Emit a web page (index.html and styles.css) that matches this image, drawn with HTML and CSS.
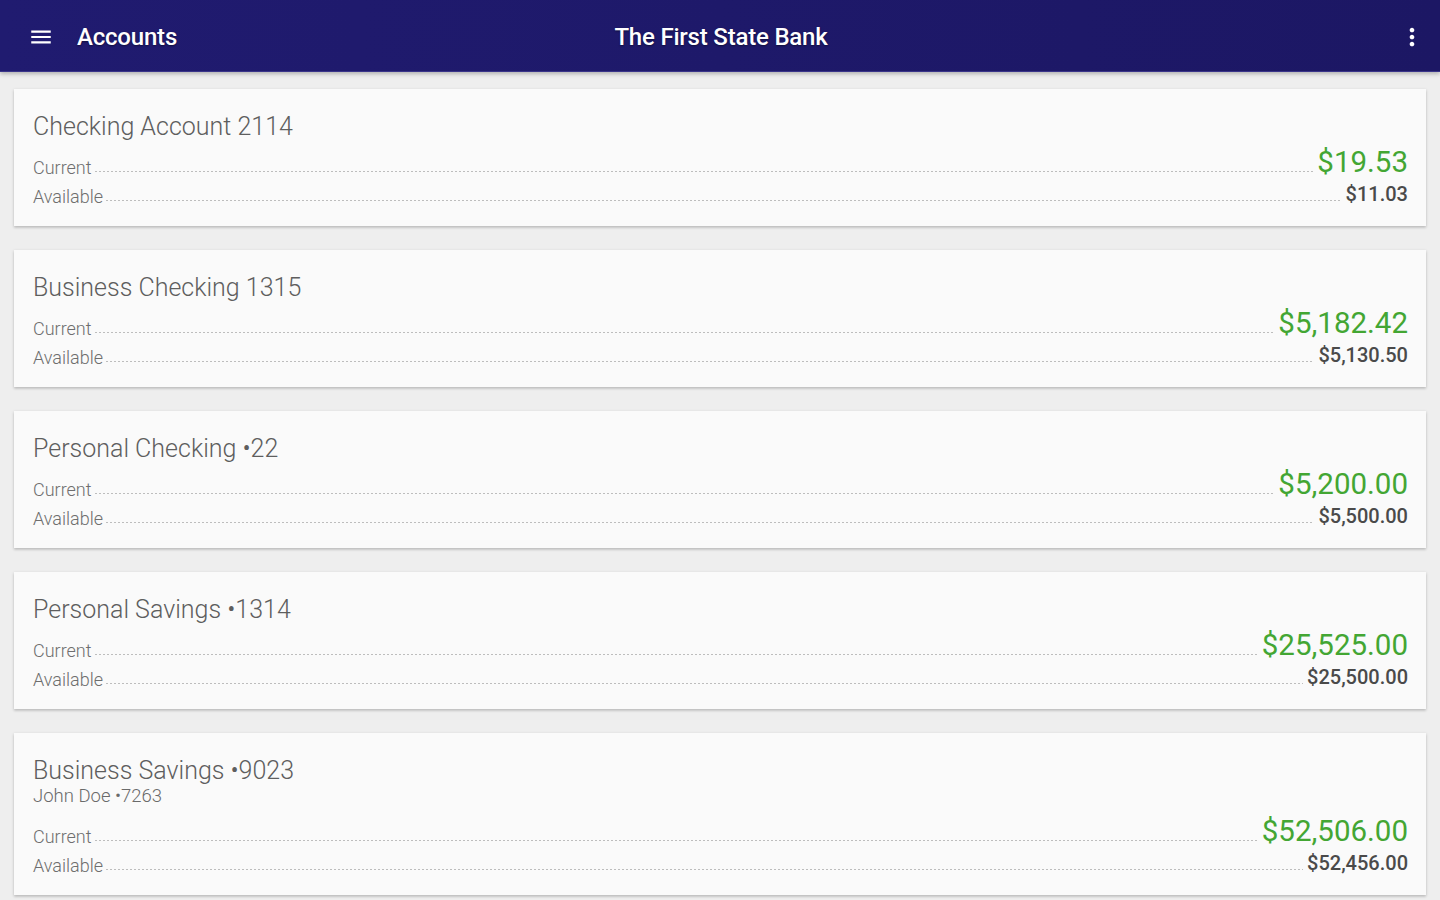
FILE: index.html
```html
<!DOCTYPE html>
<html lang="en">
  <head>
    <meta charset="UTF-8" />
    <title>Accounts - The First State Bank</title>
    <link rel="stylesheet" href="styles.css">
  </head>
  <body>
    <header class="appbar">
      <div class="appbar-left">
        <svg class="icon-menu" viewBox="0 0 24 24" width="26" height="26">
          <path fill="#fff" d="M3 18h18v-2H3v2zm0-5h18v-2H3v2zm0-7v2h18V6H3z" />
        </svg>
        <span class="appbar-title">Accounts</span>
      </div>
      <div class="appbar-center">The First State Bank</div>
      <div class="appbar-right">
        <svg class="icon-more" viewBox="0 0 24 24" width="28" height="28">
          <path fill="#fff" d="M12 8c1.1 0 2-.9 2-2s-.9-2-2-2-2 .9-2 2 .9 2 2 2zm0 2c-1.1 0-2 .9-2 2s.9 2 2 2 2-.9 2-2-.9-2-2-2zm0 6c-1.1 0-2 .9-2 2s.9 2 2 2 2-.9 2-2-.9-2-2-2z" />
        </svg>
      </div>
    </header>

    <main class="accounts">
      <!-- Checking -->
      <div class="card">
        <div class="card-title">Checking Account 2114</div>
        <div class="row row-current">
          <span class="label">Current</span>
          <span class="leader"></span>
          <span class="amount">$19.53</span>
        </div>
        <div class="row row-available">
          <span class="label">Available</span>
          <span class="leader"></span>
          <span class="amount">$11.03</span>
        </div>
      </div>

      <div class="card">
        <div class="card-title">Business Checking 1315</div>
        <div class="row row-current">
          <span class="label">Current</span>
          <span class="leader"></span>
          <span class="amount">$5,182.42</span>
        </div>
        <div class="row row-available">
          <span class="label">Available</span>
          <span class="leader"></span>
          <span class="amount">$5,130.50</span>
        </div>
      </div>

      <div class="card">
        <div class="card-title">Personal Checking •22</div>
        <div class="row row-current">
          <span class="label">Current</span>
          <span class="leader"></span>
          <span class="amount">$5,200.00</span>
        </div>
        <div class="row row-available">
          <span class="label">Available</span>
          <span class="leader"></span>
          <span class="amount">$5,500.00</span>
        </div>
      </div>

      <!-- Savings -->
      <div class="card">
        <div class="card-title">Personal Savings •1314</div>
        <div class="row row-current">
          <span class="label">Current</span>
          <span class="leader"></span>
          <span class="amount">$25,525.00</span>
        </div>
        <div class="row row-available">
          <span class="label">Available</span>
          <span class="leader"></span>
          <span class="amount">$25,500.00</span>
        </div>
      </div>

      <div class="card">
        <div class="card-title">Business Savings •9023</div>
        <div class="card-sub">John Doe •7263</div>
        <div class="row row-current">
          <span class="label">Current</span>
          <span class="leader"></span>
          <span class="amount">$52,506.00</span>
        </div>
        <div class="row row-available">
          <span class="label">Available</span>
          <span class="leader"></span>
          <span class="amount">$52,456.00</span>
        </div>
      </div>
    </main>
  </body>
</html>
```

FILE: styles.css
```css
body {
  font-family: Roboto, "Noto Sans", Arial, sans-serif;
  background: #eeeeee;
  margin: 0;
  height: 100vh;
  overflow: hidden;
}
.appbar {
  height: 72px;
  display: grid;
  grid-template-columns: 1fr auto 1fr;
  align-items: center;
  padding: 2px 14px 0 28px;
  background: linear-gradient(to right, #201b70, #1c1764);
  border-bottom: 1px solid #3a348a;
  box-shadow: 0 2px 4px rgba(0, 0, 0, 0.25);
  color: white;
  box-sizing: border-box;
  position: relative;
  z-index: 1;
}
.appbar-left {
  display: flex;
  align-items: center;
  gap: 23px;
}
.icon-menu {
  display: block;
}
.appbar-title,
.appbar-center {
  font-size: 24px;
  font-weight: 500;
  letter-spacing: -0.2px;
  text-shadow: 0 1px 2px rgba(0, 0, 0, 0.45);
}
.appbar-center {
  padding-right: 12px;
}
.appbar-right {
  display: flex;
  justify-content: flex-end;
}
.icon-more {
  display: block;
}
.accounts {
  display: flex;
  flex-direction: column;
  gap: 24px;
  padding: 17px 14px;
}
.card {
  background: #fafafa;
  padding: 24px 18px 20px 19px;
  box-shadow: 0 1px 3px rgba(0, 0, 0, 0.18), 0 2px 2px rgba(0, 0, 0, 0.08);
}
.card-title {
  font-size: 25px;
  font-weight: 300;
  line-height: 27px;
  color: #5e5e5e;
}
.card-sub {
  font-size: 18.5px;
  font-weight: 300;
  line-height: 25px;
  color: #6a6a6a;
}
.row {
  display: flex;
  align-items: baseline;
}
.row-current {
  margin-top: 5px;
}
.row-available {
  margin-top: 3px;
}
.label {
  position: relative;
  top: 2px;
  font-size: 18px;
  font-weight: 300;
  line-height: 20px;
  color: #6e6e6e;
}
.leader {
  flex: 1;
  height: 1px;
  margin: 0 4px 0 3px;
  background: linear-gradient(to right, #bdbdbd 2px, transparent 2px) repeat-x;
  background-size: 4px 1px;
}
.row-current .amount {
  font-size: 29.5px;
  line-height: 34px;
  color: #43a633;
}
.row-available .amount {
  font-size: 20px;
  line-height: 24px;
  font-weight: 500;
  color: #4a4a4a;
}
```
